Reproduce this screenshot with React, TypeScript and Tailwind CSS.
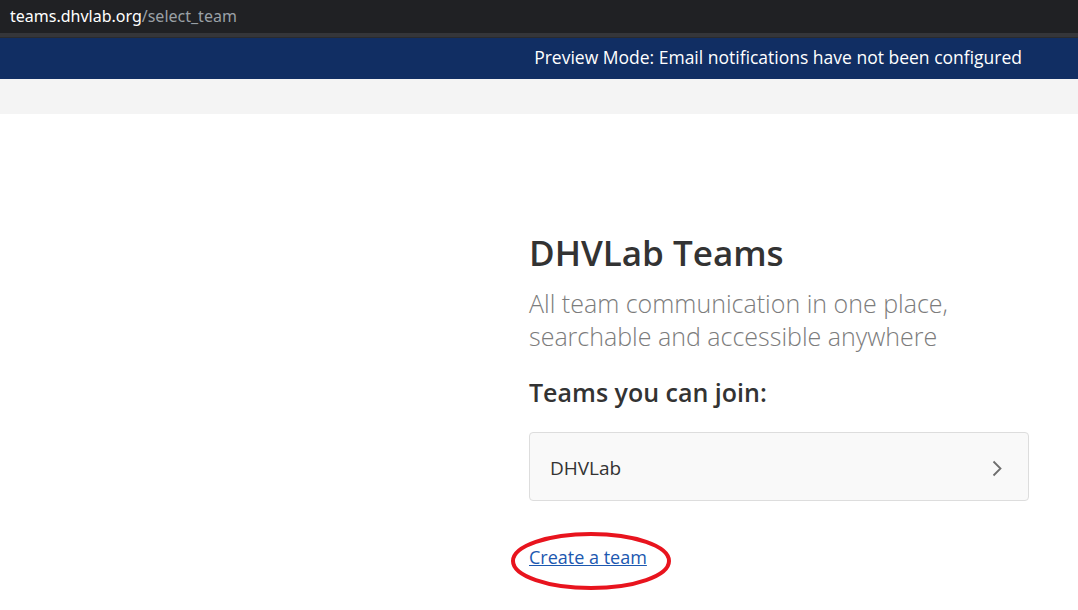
export default function App() {
  return (
    <div className="relative h-[610px] w-[1078px] overflow-hidden bg-white font-['Open_Sans',sans-serif] text-[#333]">
      {/* browser address bar */}
      <div className="flex h-[33px] items-center bg-[#202124] pb-[1px] pl-[10px] font-['Noto_Sans',sans-serif] text-[16px]">
        <span className="text-white">teams.dhvlab.org</span>
        <span className="text-[#9aa0a6]">/select_team</span>
      </div>
      <div className="h-[5px] border-b border-[#2a2b2e] bg-[#35363a]" />

      {/* preview banner */}
      <div className="flex h-[41px] items-center justify-end bg-[#112e63] pb-[3px] pr-[56px] text-[17.5px] text-white">
        Preview Mode: Email notifications have not been configured
      </div>
      <div className="h-[35px] bg-[#f4f4f4]" />

      <div className="flex">
        <div className="flex-1" />
        <div className="mr-[49px] w-[500px] pt-[115px]">
          <h1 className="text-[35px] font-semibold leading-[48px] text-[#333]">DHVLab Teams</h1>
          <p className="mt-[10px] text-[25px] font-light leading-[33px] text-[#7c7c7c]">
            All team communication in one place,
            <br />
            searchable and accessible anywhere
          </p>
          <h2 className="mt-[23px] text-[25px] font-semibold leading-[32px] text-[#333]">Teams you can join:</h2>
          <div className="mt-[24px] flex h-[69px] items-center justify-between rounded-[4px] border border-[#dddddd] bg-[#f9f9f9] pl-[20px] pr-[26px] pt-[4px]">
            <span className="text-[19px] text-[#333]">DHVLab</span>
            <svg width="10" height="17" viewBox="0 0 10 17" fill="none">
              <path d="M1.5 1.5L8.5 8.5L1.5 15.5" stroke="#6e6e6e" strokeWidth="1.8" />
            </svg>
          </div>
          <a href="#" className="mt-[44px] inline-block text-[18px] leading-[24px] text-[#1c58b0] underline">
            Create a team
          </a>
        </div>
      </div>

      {/* red annotation ellipse */}
      <svg className="absolute left-[508px] top-[529px]" width="168" height="66" viewBox="0 0 168 66">
        <ellipse cx="83" cy="32" rx="78" ry="27" fill="none" stroke="#e8141e" strokeWidth="4" />
      </svg>
    </div>
  );
}
